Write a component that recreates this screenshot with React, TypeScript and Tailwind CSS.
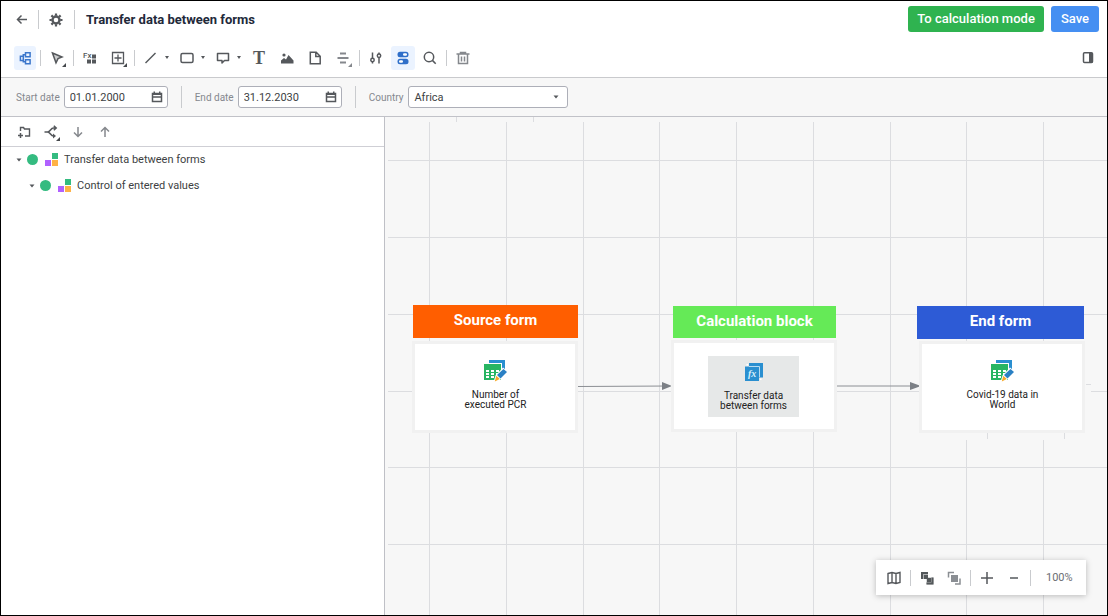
import { useState } from 'react'
import type { ReactNode } from 'react'

const GRID_X = [44, 121, 198, 274, 351, 428, 505, 581, 658, 735, 812, 888]
const GRID_Y = [43, 120, 197, 274, 350, 427, 504, 581]

interface IconProps {
  children: ReactNode
  size?: number
  className?: string
}

function Icon({ children, size = 16, className = 'text-[#55585c]' }: IconProps) {
  return (
    <svg
      width={size}
      height={size}
      viewBox={`0 0 ${size} ${size}`}
      fill="none"
      stroke="currentColor"
      strokeWidth={1.5}
      aria-hidden="true"
      className={`shrink-0 ${className}`}
    >
      {children}
    </svg>
  )
}

interface ToolProps {
  label: string
  children: ReactNode
  active?: boolean
  className?: string
}

function Tool({ label, children, active = false, className = 'w-6' }: ToolProps) {
  return (
    <button
      type="button"
      aria-label={label}
      title={label}
      className={`relative flex h-6 shrink-0 items-center justify-center rounded-[3px] ${className} ${active ? 'bg-[#ebf3ff]' : 'hover:bg-gray-100'}`}
    >
      {children}
    </button>
  )
}

function Divider({ className = 'mx-1 h-4' }: { className?: string }) {
  return <span className={`w-px shrink-0 bg-[#c9cbce] ${className}`} />
}

function Caret({ className = '' }: { className?: string }) {
  return (
    <svg width="6" height="4" viewBox="0 0 6 4" className={`shrink-0 text-[#55585c] ${className}`} aria-hidden="true">
      <path d="M0.5 0.5h5L3 3.5z" fill="currentColor" />
    </svg>
  )
}

// small triangle in the lower right corner of a tool that opens a menu
function Corner({ className = 'text-[#45484c]' }: { className?: string }) {
  return (
    <svg width="4" height="4" viewBox="0 0 4 4" className={`absolute right-[3px] bottom-[3px] ${className}`} aria-hidden="true">
      <path d="M4 0v4H0z" fill="currentColor" />
    </svg>
  )
}

function CaretButton({ label }: { label: string }) {
  return (
    <button type="button" aria-label={label} className="flex h-6 w-2 items-center justify-center">
      <svg width="4" height="3" viewBox="0 0 4 3" className="text-[#55585c]" aria-hidden="true">
        <path d="M0 0h4L2 3z" fill="currentColor" />
      </svg>
    </button>
  )
}

function Header() {
  return (
    <header className="flex h-[37px] items-center pr-2 pl-[9px]">
      <Tool label="Back">
        <Icon>
          <path d="M13 7.5H3.5M7.5 3.5l-4 4 4 4" />
        </Icon>
      </Tool>
      <Divider className="ml-1 h-[19px]" />
      <Tool label="Settings" className="ml-[5px] w-6">
        <Icon>
          <circle cx="8" cy="8" r="3.5" strokeWidth="2.4" />
          <path
            d="M8 1.5v2.3M8 12.2v2.3M1.5 8h2.3M12.2 8h2.3M3.4 3.4l1.6 1.6M11 11l1.6 1.6M3.4 12.6l1.6-1.6M11 5l1.6-1.6"
            strokeWidth="2.2"
          />
        </Icon>
      </Tool>
      <Divider className="ml-[6px] h-[19px]" />
      <h1 className="ml-[11px] text-[13px] font-bold text-[#22293a]">Transfer data between forms</h1>
      <div className="ml-auto flex gap-[7px] pb-px">
        <button type="button" className="h-[26px] rounded-[3px] bg-[#2fb350] px-[9px] text-[13px] font-medium text-white">
          To calculation mode
        </button>
        <button type="button" className="h-[26px] rounded-[3px] bg-[#458ff2] px-[10px] text-[13px] font-medium text-white">
          Save
        </button>
      </div>
    </header>
  )
}

function Toolbar() {
  return (
    <div className="flex h-10 items-center border-b border-[#c9cacd] pr-[7px] pl-[13px]">
      <Tool label="Object tree" active className="w-[22px]">
        <Icon className="text-[#3a76cc]">
          <path d="M8.5 2.7h4.6v4H8.5zM8.5 9.7h4.6v4H8.5zM8.5 4.7H6.3v7h2.2M6.3 6.2H3.4v4.2h2.9" strokeWidth="1.5" />
        </Icon>
      </Tool>
      <Divider />
      <Tool label="Select">
        <Icon>
          <path d="M3.5 3l9.5 4-4 1.6L7 12.8z" fill="currentColor" fillOpacity="0.3" />
        </Icon>
        <Corner />
      </Tool>
      <Divider />
      <div className="flex gap-1">
        <Tool label="Formula block">
          <span className="absolute top-[6px] left-[5px] text-[8px] leading-[8px] font-medium text-[#55585c]">Fx</span>
          <Icon>
            <path d="M10 4.5h4v4h-4zM5 9.5h4v4H5zM10 9.5h4v4h-4z" fill="currentColor" stroke="none" />
          </Icon>
        </Tool>
        <Tool label="Add block">
          <Icon>
            <path d="M2.5 2.5h11v11h-11zM8 4.5v7M4.5 8h7" strokeWidth="1.3" />
          </Icon>
          <Corner />
        </Tool>
      </div>
      <Divider />
      <div className="flex gap-1">
        <div className="flex">
          <Tool label="Line">
            <Icon>
              <path d="M2.5 13l10-10" />
            </Icon>
          </Tool>
          <CaretButton label="Line options" />
        </div>
        <div className="flex">
          <Tool label="Shape">
            <Icon>
              <rect x="2" y="3.5" width="12" height="9" rx="1.5" />
            </Icon>
          </Tool>
          <CaretButton label="Shape options" />
        </div>
        <div className="flex">
          <Tool label="Callout">
            <Icon>
              <path d="M2.5 3.5h11v7h-4l-2.5 2.5v-2.5h-4.5z" strokeLinejoin="round" />
            </Icon>
          </Tool>
          <CaretButton label="Callout options" />
        </div>
        <Tool label="Text">
          <span className="font-['Liberation_Serif',serif] text-[18px] leading-[18px] font-bold text-[#55585c]">T</span>
        </Tool>
        <Tool label="Image">
          <Icon>
            <path d="M2 13.5v-3l3-2.5 2 1.5 2.5-4.5 5 5.5v3z" fill="currentColor" stroke="none" />
            <circle cx="5" cy="5" r="1.6" fill="currentColor" stroke="none" />
          </Icon>
        </Tool>
        <Tool label="Document">
          <Icon>
            <path d="M3.3 2.3h5.9l4 4v7.4H3.3zM8.8 2.3v4.3h4.4" />
          </Icon>
        </Tool>
        <Tool label="Align">
          <Icon className="text-[#85888d]">
            <path d="M5 3.5h6M2.5 8h11M5 12.5h6" strokeWidth="2" />
          </Icon>
          <Corner className="text-[#85888d]" />
        </Tool>
      </div>
      <Divider />
      <div className="flex gap-[3px]">
        <Tool label="Parameters">
          <Icon>
            <path d="M4.5 2.5v6M4.5 11.5v2M11 2.5v1.5M11 7.5v6" />
            <circle cx="4.5" cy="10" r="1.7" />
            <circle cx="11" cy="5.7" r="1.7" />
          </Icon>
        </Tool>
        <Tool label="Parameter panel" active>
          <Icon className="text-[#2f6fc9]">
            <rect x="2.5" y="1.8" width="11" height="5.4" rx="2.5" fill="currentColor" stroke="none" />
            <rect x="2.5" y="8.8" width="11" height="5.4" rx="2.5" fill="currentColor" stroke="none" />
            <rect x="8" y="3.3" width="4" height="2.4" rx="1.2" fill="white" stroke="none" />
            <rect x="4" y="10.3" width="4" height="2.4" rx="1.2" fill="white" stroke="none" />
          </Icon>
        </Tool>
        <Tool label="Search">
          <Icon>
            <circle cx="7" cy="7" r="4.7" />
            <path d="M10.4 10.4l3.3 3.3" />
          </Icon>
        </Tool>
      </div>
      <Divider />
      <Tool label="Delete">
        <Icon className="text-[#85888d]">
          <path d="M1.5 4h13M5.5 3.5v-1h5v1M3.5 4v9.5h9V4M6.5 6.5v5M9.5 6.5v5" />
        </Icon>
      </Tool>
      <Tool label="Toggle side panel" className="ml-auto w-6">
        <Icon>
          <rect x="3.5" y="2.8" width="9" height="9.6" rx="1" />
          <path d="M9 3h4v9.5H9z" fill="currentColor" stroke="none" />
        </Icon>
      </Tool>
    </div>
  )
}

function DateField({ id, label, initial }: { id: string; label: string; initial: string }) {
  const [value, setValue] = useState(initial)
  return (
    <div className="flex items-center gap-1">
      <label htmlFor={id} className="text-[10px] whitespace-nowrap text-[#85888e]">
        {label}
      </label>
      <div className="flex h-[22px] w-[104px] items-center rounded-[3px] border border-[#adafb8] bg-white pr-1 pl-[5px]">
        <input
          id={id}
          type="text"
          value={value}
          onChange={(e) => setValue(e.target.value)}
          className="min-w-0 flex-1 bg-transparent pt-[2px] text-[11px] text-[#3d3f43] outline-none"
        />
        <button type="button" aria-label={`${label} calendar`}>
          <Icon size={12}>
            <path d="M1.5 2.5h9v8h-9zM1.5 6h9" />
            <path d="M1 2h10v2H1zM2.5 0.5h1.5v2H2.5zM8 0.5h1.5v2H8z" fill="currentColor" stroke="none" />
          </Icon>
        </button>
      </div>
    </div>
  )
}

function Parameters() {
  return (
    <div className="flex h-[39px] items-center border-b border-[#c1c2c8] bg-[#f7f7f7] pl-[15px]">
      <DateField id="start-date" label="Start date" initial="01.01.2000" />
      <Divider className="mx-[13px] h-[22px]" />
      <DateField id="end-date" label="End date" initial="31.12.2030" />
      <Divider className="mx-[13px] h-[22px]" />
      <div className="flex items-center gap-[5px]">
        <label htmlFor="country" className="text-[10px] text-[#85888e]">
          Country
        </label>
        <div className="relative">
          <select
            id="country"
            defaultValue="Africa"
            className="block h-[22px] w-40 appearance-none rounded-[3px] border border-[#adafb8] bg-white px-[5px] pt-[2px] text-[11px] text-[#3d3f43] outline-none"
          >
            <option>Africa</option>
          </select>
          <Caret className="pointer-events-none absolute top-[9px] right-[9px]" />
        </div>
      </div>
    </div>
  )
}

function TreeRow({ label, className }: { label: string; className: string }) {
  return (
    <li className={`flex h-[26px] items-center pb-px ${className}`}>
      <button type="button" aria-label={`Collapse ${label}`} className="flex w-2 justify-center">
        <Caret />
      </button>
      <span className="ml-1 h-[11px] w-[11px] rounded-full bg-[#34bb80]" />
      <svg width="13" height="13" viewBox="0 0 13 13" className="ml-[7px]" aria-hidden="true">
        <path d="M7 0h6v6H7z" fill="#34bb80" />
        <path d="M0 7h6v6H0z" fill="#b061ff" />
        <path d="M7 7h6v6H7z" fill="#ffb246" />
      </svg>
      <span className="ml-[6px] pt-[2px] text-[11px] text-[#3d3f43]">{label}</span>
    </li>
  )
}

function ObjectTree() {
  return (
    <aside className="w-96 shrink-0 border-r border-[#bfc0c6] bg-white">
      <div className="flex h-[30px] items-center gap-[3px] border-b border-[#cfcfd5] pl-[11px]">
        <Tool label="Add folder">
          <Icon>
            <path d="M4.5 7V3.5h3l1 1.5h5v7H9" strokeWidth="1.4" />
            <path d="M4.5 9v5M2 11.5h5" />
          </Icon>
        </Tool>
        <Tool label="Add branch">
          <Icon>
            <path d="M1.5 8h3c3 0 3-4 6-4h2.5M4.5 8c3 0 3 4 6 4h1M10.8 1.8l2.4 2.2-2.4 2.2" />
            <path d="M10 9.5l3 2.5-3 2.5z" fill="currentColor" stroke="none" />
          </Icon>
          <Corner />
        </Tool>
        <Tool label="Move down">
          <Icon className="text-[#85888d]">
            <path d="M8 3v9.5M4 8.5l4 4 4-4" />
          </Icon>
        </Tool>
        <Tool label="Move up">
          <Icon className="text-[#85888d]">
            <path d="M8 13V3.5M4 7.5l4-4 4 4" />
          </Icon>
        </Tool>
      </div>
      <ul>
        <TreeRow label="Transfer data between forms" className="pl-[14px]" />
        <TreeRow label="Control of entered values" className="pl-[27px]" />
      </ul>
    </aside>
  )
}

function FormIcon() {
  return (
    <svg width="26" height="24" viewBox="0 0 26 24" aria-hidden="true">
      <path d="M7 2h16v13H7z" fill="#2a8fd0" />
      <path d="M2 5h18v17H2z" fill="white" />
      <path d="M2 6h17v16H2z" fill="#27b562" />
      <path d="M4 12h3v2H4zM9 12h3v2H9zM14 12h3v2h-3zM4 15h3v2H4zM9 15h3v2H9zM14 15h3v2h-3zM4 18h3v2H4zM9 18h3v2H9z" fill="white" />
      <path d="M11.5 24l2-6.5 7.5-8 5 4-8 8.5z" fill="white" />
      <path d="M15 17l6.5-6 3.5 3-6.5 6.5z" fill="#2a80c4" />
      <path d="M14.3 17.7l3.5 3.3-5 2.5z" fill="#f6a829" />
    </svg>
  )
}

function FormulaIcon() {
  return (
    <svg width="20" height="20" viewBox="0 0 20 20" aria-hidden="true">
      <path d="M1 1h18v18H1z" fill="#2a8fd0" />
      <path d="M5 4.5h10.5V15" fill="none" stroke="#b7dcf2" />
      <path d="M1 1h4v3.5H1zM15 15.5h4V19h-4z" fill="#e6e8e8" />
      <path d="M2.5 2h1.5v1.5H2.500zM16 16.500h1.500V18H16z" fill="white" />
      <text x="4" y="15" fontSize="10" fontStyle="italic" fontWeight="700" fill="#d9eefa" className="font-['Liberation_Serif',serif]">
        fx
      </text>
    </svg>
  )
}

interface BlockProps {
  title: string
  titleClass: string
  cardClass: string
  children: ReactNode
}

function Block({ title, titleClass, cardClass, children }: BlockProps) {
  return (
    <>
      <h2 className={`absolute flex items-center justify-center pb-[2px] text-[15px] font-bold text-white ${titleClass}`}>
        {title}
      </h2>
      <div className={`absolute flex h-[92px] w-[166px] flex-col items-center border-[3px] border-[#f1f1f1] bg-white ${cardClass}`}>
        {children}
      </div>
    </>
  )
}

function ZoomBar() {
  return (
    <div className="absolute right-[21px] bottom-5 flex h-[35px] w-[210px] items-center bg-white pl-[6px] shadow-[0_1px_6px_rgba(0,0,0,0.25)]">
      <Tool label="Mini map">
        <Icon>
          <path d="M2 3.5l4-1 4 1 4-1v10l-4 1-4-1-4 1zM6 2.5v10M10 3.5v10" strokeWidth="1.4" />
        </Icon>
      </Tool>
      <Divider />
      <div className="flex gap-[3px]">
        <Tool label="Fit to selection">
          <Icon>
            <path d="M2 2h7v2H4v5H2zM14.5 14.5h-7v-2h5v-5h2z" fill="currentColor" stroke="none" />
            <path d="M5 5h4v4H5zM8 8h4v4H8z" fill="currentColor" stroke="none" />
            <path d="M2 2h7v7H2zM7.5 7.5h7v7h-7z" fill="currentColor" fillOpacity="0.45" stroke="none" />
          </Icon>
        </Tool>
        <Tool label="Fit to page">
          <Icon className="text-[#8a8e93]">
            <path d="M5 5h7v7H5z" fill="currentColor" stroke="none" />
            <path d="M2.5 7.5V2.5H8M9 14h5V8.5" />
          </Icon>
        </Tool>
      </div>
      <Divider />
      <div className="flex gap-[3px]">
        <Tool label="Zoom in">
          <Icon>
            <path d="M8 2v12M2 8h12" />
          </Icon>
        </Tool>
        <Tool label="Zoom out">
          <Icon>
            <path d="M4 8h8" />
          </Icon>
        </Tool>
      </div>
      <Divider />
      <span className="ml-[11px] pt-[2px] text-[11px] text-[#6b6e73]">100%</span>
    </div>
  )
}

function Canvas() {
  return (
    <main className="relative min-w-0 flex-1 overflow-hidden bg-[#f7f7f7]">
      <svg className="absolute inset-0 h-full w-full" aria-hidden="true">
        <g stroke="#dcdde0">
          {GRID_X.map((x) => (
            <line key={x} x1={x + 0.5} x2={x + 0.5} y1="5" y2="100%" />
          ))}
          {GRID_Y.map((y) => (
            <line key={y} x1="3" x2="100%" y1={y + 0.5} y2={y + 0.5} />
          ))}
          <path d="M71.5 0v5M148.5 0v5" />
        </g>
        <path d="M534 315h172v8H534zM700 262h6v20h-6z" fill="#f7f7f7" />
        <path d="M602.5 315v7M679.5 315v7M701 267.5h5" stroke="#dcdde0" />
        <g stroke="#8c8f94" fill="#7c8086">
          <path d="M192 269.5L284 269" />
          <path d="M277 265l10 4-10 4z" stroke="none" />
          <path d="M450 269h78" />
          <path d="M525 265l11 4-11 4z" stroke="none" />
        </g>
      </svg>

      <Block title="Source form" titleClass="top-[188px] left-7 h-[33px] w-[165px] bg-[#ff5e00]" cardClass="top-[224px] left-[27px]">
        <div className="mt-[14px] ml-px flex flex-col items-center">
          <FormIcon />
          <p className="mt-2 text-center text-[10px] leading-[10px] text-[#222]">
            Number of
            <br />
            executed PCR
          </p>
        </div>
      </Block>
      <Block title="Calculation block" titleClass="top-[189px] left-72 h-8 w-[163px] bg-[#65ea57]" cardClass="top-[223px] left-[286px]">
        <div className="mt-[13px] mr-px flex h-[61px] w-[91px] flex-col items-center bg-[#e6e8e8] pt-[6px]">
          <FormulaIcon />
          <p className="mt-[9px] text-center text-[10px] leading-[10px] text-[#222]">
            Transfer data
            <br />
            between forms
          </p>
        </div>
      </Block>
      <Block title="End form" titleClass="top-[189px] left-[532px] h-[33px] w-[167px] bg-[#2d5bd6]" cardClass="top-[224px] left-[534px]">
        <div className="mt-[14px] ml-px flex flex-col items-center">
          <FormIcon />
          <p className="mt-2 text-center text-[10px] leading-[10px] text-[#222]">
            Covid-19 data in
            <br />
            World
          </p>
        </div>
      </Block>

      <ZoomBar />
    </main>
  )
}

export default function App() {
  return (
    <div className="flex min-h-screen flex-col border border-black bg-white font-[Roboto,sans-serif]">
      <Header />
      <Toolbar />
      <Parameters />
      <div className="flex flex-1">
        <ObjectTree />
        <Canvas />
      </div>
    </div>
  )
}
